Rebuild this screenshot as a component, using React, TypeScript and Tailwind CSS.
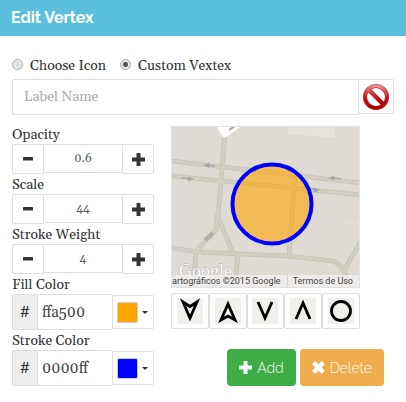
import { useState } from "react";
import type { ReactNode } from "react";

const serif = "font-['Gelasio','Liberation_Serif',serif]";

function Plus() {
  return (
    <svg viewBox="0 0 12 12" className="size-[13px] shrink-0" fill="currentColor" aria-hidden="true">
      <path d="M4.200 0h3.600v4.200H12v3.600H7.800V12H4.200V7.800H0V4.200h4.200z" />
    </svg>
  );
}

function Minus() {
  return (
    <svg viewBox="0 0 12 12" className="size-3 shrink-0" fill="currentColor" aria-hidden="true">
      <rect x="1" y="4" width="10" height="3.5" rx=".5" />
    </svg>
  );
}

function Spinner({ id, label, initial, step }: { id: string; label: string; initial: number; step: number }) {
  const [value, setValue] = useState(String(initial));
  const change = (d: number) => setValue(String(Math.round((Number(value) + d) * 10) / 10));
  return (
    <div>
      <label htmlFor={id} className="block h-5 leading-[22px]">{label}</label>
      <div className="flex h-[30px] items-start">
        <button type="button" aria-label={`Decrease ${label}`} onClick={() => change(-step)} className="flex h-[30px] w-8 items-center justify-center rounded-l-xs border border-[#ddd]">
          <Minus />
        </button>
        <input id={id} value={value} onChange={(e) => setValue(e.target.value)} className="h-[29px] min-w-0 flex-1 border-y border-[#ddd] text-center text-xs text-[#555] oldstyle-nums outline-none" />
        <button type="button" aria-label={`Increase ${label}`} onClick={() => change(step)} className="flex h-[30px] w-8 items-center justify-center rounded-r-xs border border-[#ddd]">
          <Plus />
        </button>
      </div>
    </div>
  );
}

function ColorField({ id, label, initial }: { id: string; label: string; initial: string }) {
  const [value, setValue] = useState(initial);
  return (
    <div>
      <label htmlFor={id} className="block h-5 leading-[22px]">{label}</label>
      <div className="flex h-9 items-center">
        <span className="flex h-9 w-[26px] items-center justify-center rounded-l-xs border border-[#ddd] bg-[#eee] text-base">#</span>
        <input id={id} value={value} onChange={(e) => setValue(e.target.value)} className="h-9 min-w-0 flex-1 border-y border-[#ddd] px-1 text-[15px] text-[#444] oldstyle-nums outline-none" />
        <button type="button" aria-label={`Pick ${label}`} className="flex h-[34px] w-[42px] items-center gap-1 rounded-r-xs border border-[#ddd] pl-1">
          <span className="size-[21px] rounded-xs border border-[#ccc]" style={{ backgroundColor: `#${value}` }} />
          <svg viewBox="0 0 6 3" className="h-[3px] w-1.5" fill="#333" aria-hidden="true"><path d="M0 0h6L3 3z" /></svg>
        </button>
      </div>
    </div>
  );
}

function MapPreview() {
  const roads = (
    <>
      <path d="M0 34L189 56M0 49L189 68" />
      <path d="M53 5L46 90L61 126M45 102L24 124M44 102L46 85M24 124L21 162M66 127L63 162M123 50L117 128" />
      <path d="M0 121L26 125L66 127L117 129L160 134Q168 136 173 146L180 162M172 143L189 114" />
    </>
  );
  return (
    <div className="relative h-[162px] overflow-hidden border border-[#e2e1df] bg-[#dfdbd4]">
      <svg viewBox="0 0 187 160" className="size-full" preserveAspectRatio="xMidYMid slice" role="img" aria-label="Map preview">
        <path d="M116 0h47v11L116 7z" fill="#e7e2da" />
        <path d="M170 95h17" stroke="#e5e3dd" />
        <g fill="none" stroke="#c3c3b4" strokeWidth="4.600">{roads}</g>
        <g fill="none" stroke="#d1d0c3" strokeWidth="3">{roads}</g>
        <path d="M45 0h23L56 9q-4 3-6 0z" fill="#fff" />
        <path d="M57 3l6-4" stroke="#aaa" strokeWidth="2" />
        <g stroke="#a3a7a5" strokeWidth="1.500" fill="#a3a7a5">
          <path d="M34 38l9 1M10 51l8 1M161 51l8 1M139 62l6 1" />
          <path d="M31 38l6-2.500v5zM22 52l-6-2.500v5zM156 51l6-2.500v5zM148 63l-6-2.500v5z" stroke="none" />
          <path d="M33 113l8-7" strokeWidth="4" opacity=".8" />
        </g>
        <circle cx="100" cy="77" r="39.500" fill="#ffa500" fillOpacity=".6" stroke="#00f" strokeWidth="4" />
        <text x="7" y="150" fill="#fff" stroke="#aaa" strokeWidth=".8" paintOrder="stroke" fontSize="18" className="font-['Liberation_Serif',serif]">Google</text>
      </svg>
      <div className="absolute inset-x-0 bottom-0 flex h-3 items-center justify-end bg-[#f0efed]/85 font-['Roboto',sans-serif] text-[9px] leading-3 whitespace-nowrap text-[#444]">
        <span className="border-r border-[#d5d4d0] pr-1.5">artográficos ©2015 Google</span>
        <a href="#terms" className="pr-1.5 pl-[5px]">Termos de Uso</a>
      </div>
    </div>
  );
}

const shapes: { name: string; drawing: ReactNode }[] = [
  { name: "Backward closed arrow", drawing: <path d="M6 4L13 20L20 4L13 8.500z" /> },
  { name: "Forward closed arrow", drawing: <path d="M13 6L20 22L13 18L6 22z" /> },
  { name: "Backward open arrow", drawing: <path d="M6 4L13 20L20 4" /> },
  { name: "Forward open arrow", drawing: <path d="M6 21L13 5L20 21" /> },
  { name: "Circle", drawing: <circle cx="13" cy="13" r="9.500" /> },
];

export default function App() {
  const [mode, setMode] = useState("custom");
  const radio = "mr-[7px] mb-1 size-[11px] appearance-none rounded-full border border-[#aaa] bg-[radial-gradient(#ddd,#eee)] checked:bg-[radial-gradient(#555_0_2px,#e5e5e5_3px)]";
  return (
    <main className={`bg-white text-sm text-[#333] ${serif}`}>
      <h1 className="flex h-9 items-center bg-[#5bc0de] px-[11px] font-['Raleway','Lato',sans-serif] text-base font-bold text-white">Edit Vertex</h1>
      <form className="px-3 pt-[18px]" onSubmit={(e) => e.preventDefault()}>
        <div className="flex h-[25px] items-start gap-3.5 leading-6">
          <label className="flex items-center">
            <input type="radio" name="mode" checked={mode === "icon"} onChange={() => setMode("icon")} className={radio} />Choose Icon
          </label>
          <label className="flex items-center">
            <input type="radio" name="mode" checked={mode === "custom"} onChange={() => setMode("custom")} className={radio} />Custom Vextex
          </label>
        </div>
        <div className="flex items-start">
          <input aria-label="Label Name" placeholder="Label Name" className="h-9 min-w-0 flex-1 rounded-l-xs border border-[#ddd] px-[11px] placeholder:text-[#aaa] outline-none" />
          <button type="button" aria-label="No icon" className="-ml-px flex h-[35px] w-9 items-center justify-center rounded-r-xs border border-[#ddd]">
            <svg viewBox="0 0 28 28" className="size-7" aria-hidden="true">
              <defs>
                <linearGradient id="ban" gradientUnits="userSpaceOnUse" x1="0" y1="1" x2="0" y2="27"><stop offset="0" stopColor="#f2a0a0" /><stop offset=".4" stopColor="#d83030" /><stop offset=".6" stopColor="#c00808" /><stop offset="1" stopColor="#a80000" /></linearGradient>
              </defs>
              <path d="M6.500 6.500l15 15" stroke="#981818" strokeWidth="4.200" />
              <circle cx="14" cy="14" r="11" fill="none" stroke="#a83030" strokeWidth="4" />
              <circle cx="14" cy="14" r="11" fill="none" stroke="url(#ban)" strokeWidth="2.800" />
              <path d="M6.500 6.500l15 15" stroke="url(#ban)" strokeWidth="3" />
            </svg>
          </button>
        </div>
        <div className="flex gap-[17px] pt-[9px]">
          <div className="w-[142px] shrink-0">
            <Spinner id="opacity" label="Opacity" initial={0.6} step={0.1} />
            <Spinner id="scale" label="Scale" initial={44} step={1} />
            <Spinner id="weight" label="Stroke Weight" initial={4} step={1} />
            <ColorField id="fill" label="Fill Color" initial="ffa500" />
            <ColorField id="stroke" label="Stroke Color" initial="0000ff" />
          </div>
          <div className="min-w-0 flex-1 pt-0.5">
            <div className="mr-[34px]">
              <MapPreview />
              <div className="mt-[5px] flex">
                {shapes.map((s) => (
                  <button key={s.name} type="button" aria-label={s.name} className="flex h-9 flex-1 items-center justify-center rounded-xs border border-[#ddd]">
                    <svg viewBox="0 0 26 26" className="size-[26px] bg-[#f1f0ec]" fill="none" stroke="#000" strokeWidth="2.800" aria-hidden="true">{s.drawing}</svg>
                  </button>
                ))}
              </div>
            </div>
            <div className="mt-5 mr-2.5 flex justify-end gap-1 font-['Raleway','Lato',sans-serif] text-sm font-light text-white">
              <button type="submit" className="flex h-[37px] items-center gap-[5px] rounded-sm bg-[#3fad46] px-3"><Plus />Add</button>
              <button type="button" className="flex h-[37px] items-center gap-[5px] rounded-sm bg-[#f0ad4e] px-3">
                <svg viewBox="0 0 12 12" className="size-[13px] shrink-0" aria-hidden="true"><path d="M1.500 1.500l9 9M10.500 1.500l-9 9" stroke="currentColor" strokeWidth="4" /></svg>
                Delete
              </button>
            </div>
          </div>
        </div>
      </form>
    </main>
  );
}
